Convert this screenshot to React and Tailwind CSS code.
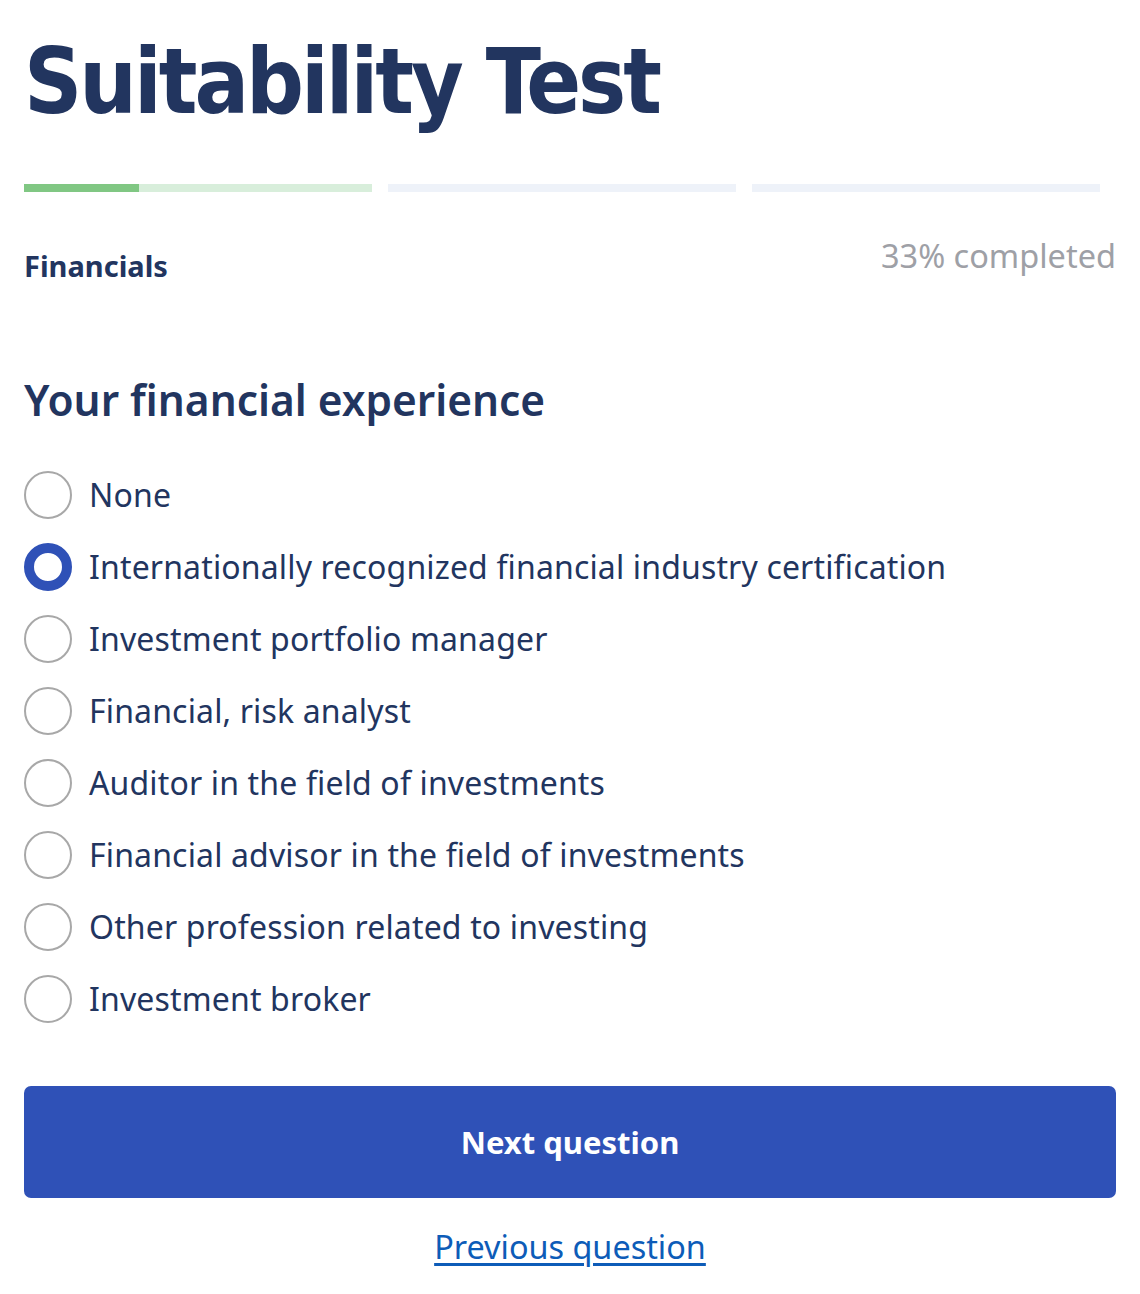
import React from "react";

const options = [
  "None",
  "Internationally recognized financial industry certification",
  "Investment portfolio manager",
  "Financial, risk analyst",
  "Auditor in the field of investments",
  "Financial advisor in the field of investments",
  "Other profession related to investing",
  "Investment broker",
];

export default function App() {
  const selected = 1;
  return (
    <div className="bg-white w-[1140px] min-h-[1294px] px-6 text-[#22355f]" style={{ fontFamily: "'Noto Sans', sans-serif" }}>
      <h1
        className="pt-[32px] text-[90px] leading-[100px] font-bold tracking-[-3px]"
        style={{ fontFamily: "'DejaVu Sans Condensed', 'Liberation Sans Narrow', sans-serif" }}
      >
        Suitability Test
      </h1>
      <div className="mt-[52px] flex">
        <div className="flex-1 mr-4 h-2 bg-[#d8eedb] flex">
          <div className="w-[115px] h-2 bg-[#80c783]" />
        </div>
        <div className="flex-1 mr-4 h-2 bg-[#eef2f9]" />
        <div className="flex-1 mr-4 h-2 bg-[#eef2f9]" />
      </div>
      <div className="mt-[44px] flex justify-between items-start">
        <div className="mt-[12px] text-[29px] font-bold leading-[36px]">Financials</div>
        <div className="text-[32.5px] leading-[40px] text-[#9ea0a6]">33% completed</div>
      </div>
      <h2 className="mt-[88px] text-[42.4px] leading-[56px] font-semibold">Your financial experience</h2>
      <div className="mt-[43px] flex flex-col gap-[24px]">
        {options.map((o, i) => (
          <label key={o} className="flex items-center h-[48px] gap-[17px]">
            {i === selected ? (
              <span className="w-12 h-12 rounded-full border-[10px] border-[#2f51b7] shrink-0" />
            ) : (
              <span className="w-12 h-12 rounded-full border-2 border-[#a8a8a8] shrink-0" />
            )}
            <span className="text-[32px] leading-[40px] tracking-[0.15px]">{o}</span>
          </label>
        ))}
      </div>
      <button className="mt-[63px] w-full h-[112px] rounded-[7px] bg-[#2f51b7] text-white text-[31px] font-bold">
        Next question
      </button>
      <div className="mt-[28px] flex justify-center">
        <a href="#" className="text-[32.4px] leading-[40px] text-[#0d5cb8] underline underline-offset-4">
          Previous question
        </a>
      </div>
    </div>
  );
}
